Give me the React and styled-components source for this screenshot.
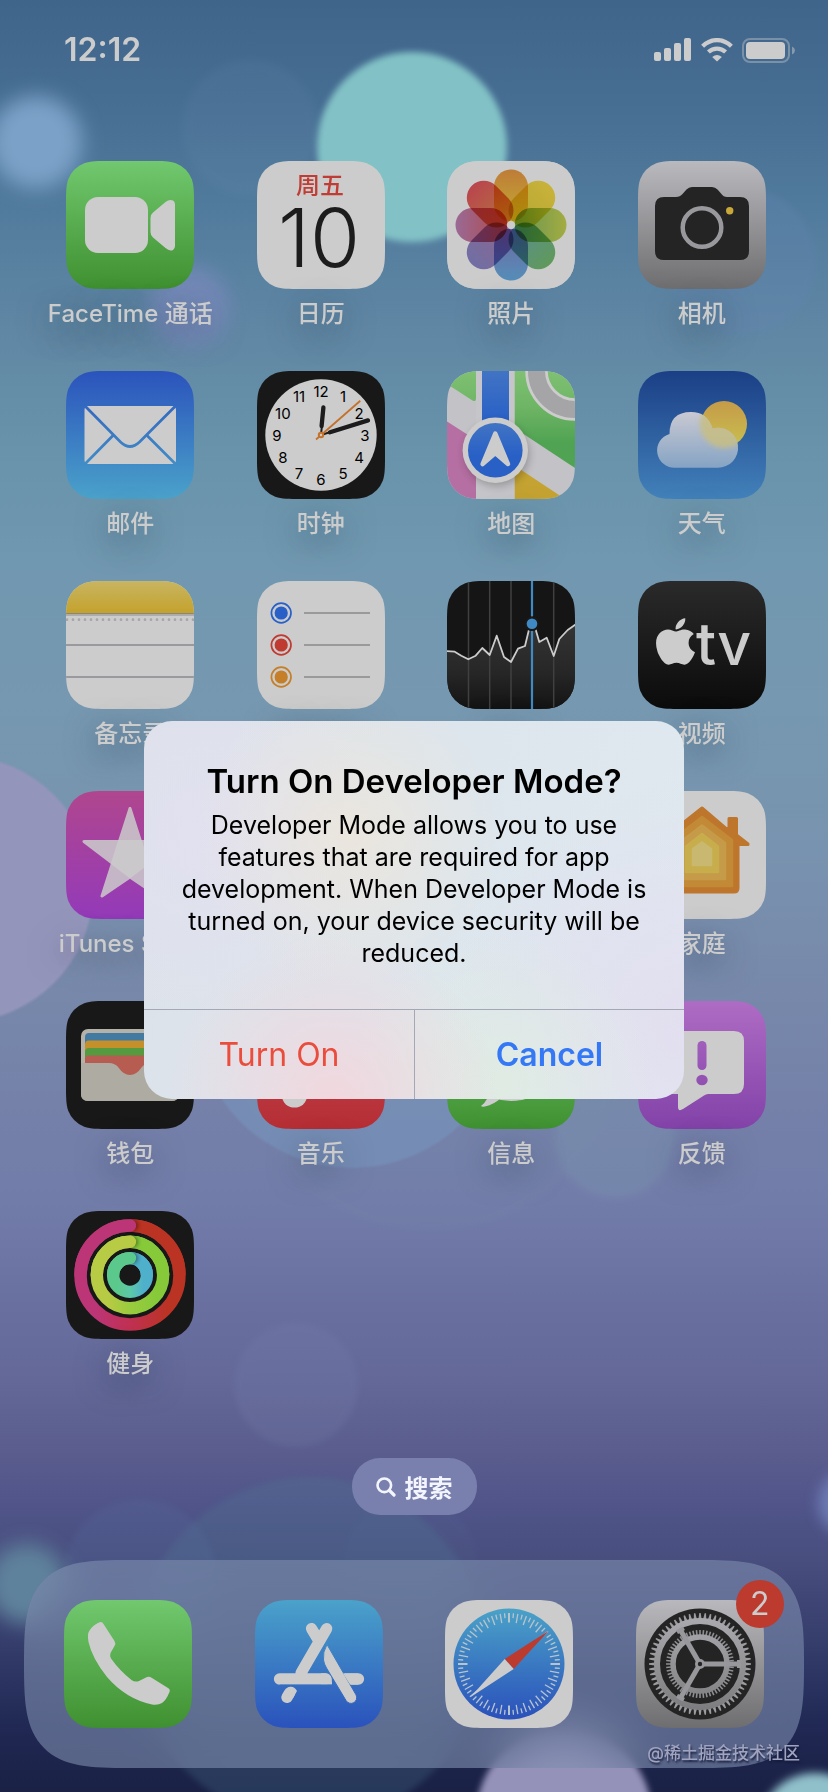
import React from "react";
import styled, { createGlobalStyle, css } from "styled-components";
import { FaApple } from "react-icons/fa";

const GlobalStyle = createGlobalStyle`
  *, *::before, *::after { box-sizing: border-box; }
  body {
    margin: 0;
    font-family: Inter, "Noto Sans CJK SC", sans-serif;
    color: #cccccc;
    background: #1a2145;
  }
  button { font: inherit; color: inherit; border: 0; padding: 0; background: none; cursor: pointer; }
`;

/* ---------- page parts ---------- */

const Screen = styled.div`
  position: relative;
  min-height: 100vh;
  display: flex;
  flex-direction: column;
  overflow: hidden;
`;

const WallpaperArt = styled.svg`
  position: absolute;
  inset: 0;
  width: 100%;
  height: 100%;
`;

const Home = styled.main`
  position: relative;
  flex: 1;
  display: flex;
  flex-direction: column;
`;

const StatusBar = styled.header`
  display: flex;
  align-items: center;
  justify-content: space-between;
  padding: 34px 32px 0 64px;
`;

const Time = styled.time`
  font-size: 32px;
  line-height: 32px;
  font-weight: 600;
`;

const StatusIcons = styled.div`
  display: flex;
  align-items: center;
  gap: 9px;
`;

const AppGrid = styled.div`
  display: grid;
  grid-template-columns: repeat(4, minmax(0, 1fr));
  row-gap: 43px;
  padding: 95px 31px 0 35px;
`;

const AppButton = styled.button`
  display: flex;
  flex-direction: column;
  align-items: center;
  gap: 11px;
`;

const AppArt = styled.svg`
  display: block;
  width: 128px;
  height: 128px;
  font-family: Inter, "Noto Sans CJK SC", sans-serif;
`;

const ArtFrame = styled.span`
  position: relative;
  display: block;
`;

const AppLabel = styled.span`
  font-size: 24px;
  line-height: 28px;
  font-weight: 500;
  white-space: nowrap;
  text-shadow: 0 8px 32px rgba(30, 50, 70, 0.6);
`;

const Badge = styled.span`
  position: absolute;
  top: -20px;
  right: -20px;
  width: 48px;
  height: 48px;
  border-radius: 24px;
  background: #bc3a2e;
  font-size: 32px;
  line-height: 48px;
  text-align: center;
`;

const SearchButton = styled.button`
  align-self: center;
  display: flex;
  align-items: center;
  gap: 9px;
  height: 57px;
  margin-top: 80px;
  padding: 0 24px;
  border-radius: 28px;
  background: #7a80ad;
  color: #f3f5ff;
  font-size: 24px;
  font-weight: 700;
`;

const Dock = styled.nav`
  display: grid;
  grid-template-columns: repeat(4, minmax(0, 1fr));
  margin: auto 24px 24px;
  padding: 40px 9px;
  border-radius: 70px;
  background: rgba(130, 145, 178, 0.58);
  backdrop-filter: blur(24px);

  @supports (corner-shape: squircle) {
    border-radius: 104px;
    corner-shape: superellipse(1.7);
  }
`;

const Overlay = styled.div`
  position: absolute;
  inset: 0;
  display: flex;
  align-items: center;
  justify-content: center;
  padding-top: 28px;
`;

const Dialog = styled.section`
  width: 540px;
  border-radius: 28px;
  overflow: hidden;
  color: #000000;
  text-align: center;
  background:
    radial-gradient(circle at 35% 100%, rgba(243, 214, 220, 0.9), transparent 32%),
    radial-gradient(circle at 66% 96%, rgba(224, 236, 226, 0.9), transparent 30%),
    radial-gradient(circle at 38% 30%, rgba(236, 230, 220, 0.9), transparent 36%),
    radial-gradient(circle at 100% 80%, rgba(227, 222, 240, 0.9), transparent 40%),
    radial-gradient(circle at 12% 30%, rgba(226, 224, 240, 0.9), transparent 34%),
    linear-gradient(100deg, #dde2ea, #dde6ed 55%, #dfe9ef);
`;

const DialogText = styled.div`
  padding: 40px 28px;
`;

const DialogTitle = styled.h1`
  margin: 0;
  font-size: 33px;
  line-height: 40px;
  font-weight: 600;
`;

const DialogBody = styled.p`
  margin: 8px 0 0;
  font-size: 25px;
  line-height: 32px;
`;

const DialogActions = styled.div`
  display: grid;
  grid-template-columns: 1fr 1fr;
  height: 90px;
  border-top: 1px solid #a4a8b4;
`;

const DialogButton = styled.button`
  font-size: 32px;
  line-height: 40px;
  ${({ $primary }) =>
    $primary
      ? css`
          color: #3478f6;
          font-weight: 600;
          border-left: 1px solid #a4a8b4;
        `
      : css`
          color: #eb4d3d;
        `}
`;

const Watermark = styled.span`
  position: absolute;
  right: 28px;
  bottom: 26px;
  font-size: 17px;
  line-height: 26px;
  font-weight: 500;
  color: #a0a4c0;
  text-shadow: 1px 2px 2px rgba(20, 25, 55, 0.9);
`;

/* ---------- drawing helpers ---------- */

const SQUIRCLE =
  "M44 0H84C96.7 0 103 0 109.8 2.2A28.8 28.8 0 0 1 125.8 18.2C128 25 128 31.3 128 44V84" +
  "C128 96.7 128 103 125.8 109.8A28.8 28.8 0 0 1 109.8 125.8C103 128 96.7 128 84 128H44" +
  "C31.3 128 25 128 18.2 125.8A28.8 28.8 0 0 1 2.2 109.8C0 103 0 96.7 0 84V44" +
  "C0 31.3 0 25 2.2 18.2A28.8 28.8 0 0 1 18.2 2.2C25 0 31.3 0 44 0Z";

function Tile({ id, from, to = from, children }) {
  return (
    <AppArt viewBox="0 0 128 128" aria-hidden="true">
      <defs>
        <clipPath id={`${id}-clip`}>
          <path d={SQUIRCLE} />
        </clipPath>
        <linearGradient id={`${id}-bg`} gradientUnits="userSpaceOnUse" x1="0" y1="0" x2="0" y2="128">
          <stop offset="0" stopColor={from} />
          <stop offset="1" stopColor={to} />
        </linearGradient>
      </defs>
      <g clipPath={`url(#${id}-clip)`}>
        <rect width="128" height="128" fill={`url(#${id}-bg)`} />
        {children}
      </g>
    </AppArt>
  );
}

function Fade({ id, stops, ...axis }) {
  return (
    <linearGradient id={id} gradientUnits="userSpaceOnUse" {...axis}>
      {stops.map(([offset, color]) => (
        <stop key={offset} offset={offset} stopColor={color} />
      ))}
    </linearGradient>
  );
}

const polar = (r, deg) => [
  64 + r * Math.sin((deg * Math.PI) / 180),
  64 - r * Math.cos((deg * Math.PI) / 180),
];

/* ---------- app icons ---------- */

const FaceTime = () => (
  <Tile id="facetime" from="#71c86e" to="#3f9030">
    <rect x="19" y="36" width="63" height="56" rx="13" fill="#ccc" />
    <path
      d="M84.5 57Q84.5 53.500 87 51.500L99.500 41Q103.500 37.800 107 39.500Q109 40.600 109 43.500V85Q109 87.800 107 88.900Q103.500 90.500 99.500 87L87 76.500Q84.500 74.500 84.500 71Z"
      fill="#ccc"
    />
  </Tile>
);

const Calendar = () => (
  <Tile id="calendar" from="#cccccc">
    <text x="63" y="33" textAnchor="middle" fontSize="24" fontWeight="500" fill="#bf3d35">
      周五
    </text>
    <text x="62" y="106" textAnchor="middle" fontSize="81" fontWeight="300" fill="#1c1c1c">
      10
    </text>
  </Tile>
);

const Multiply = styled.g`
  isolation: isolate;
  & > rect { mix-blend-mode: multiply; }
`;

const PETALS = [
  ["#ee9a45", "#f3d83e"],
  ["#fbdf48", "#e0d040"],
  ["#ccd850", "#7fb86a"],
  ["#78c070", "#6fb0b8"],
  ["#6ab2e8", "#8a80c8"],
  ["#8c8ace", "#b080b0"],
  ["#c084bc", "#dd5a58"],
  ["#e85560", "#e09050"],
];

const Photos = () => (
  <Tile id="photos" from="#cccccc">
    <defs>
      {PETALS.map(([outer, inner], i) => (
        <Fade key={i} id={`petal-${i}`} x1="0" y1="8" x2="0" y2="60" stops={[[0, outer], [1, inner]]} />
      ))}
    </defs>
    <Multiply>
      <rect width="128" height="128" fill="#ccc" />
      {PETALS.map((_, i) => (
        <rect
          key={i}
          x="47"
          y="8.500"
          width="34"
          height="52"
          rx="17"
          fill={`url(#petal-${i})`}
          transform={`rotate(${i * 45} 64 64)`}
        />
      ))}
    </Multiply>
    <circle cx="64" cy="64" r="4" fill="#ccc" />
  </Tile>
);

const Camera = () => (
  <Tile id="camera" from="#b9b9be" to="#6e6e70">
    <path
      d="M26 36H38Q42 36 44.500 33L48.500 28.500Q50.800 26 54 26H74Q77.200 26 79.500 28.500L83 32.500Q85.500 36 89 36H102Q111 36 111 45V90Q111 99 102 99H26Q17 99 17 90V45Q17 36 26 36Z"
      fill="#242424"
    />
    <circle cx="64" cy="66.500" r="19.300" fill="none" stroke="#98989d" strokeWidth="4.500" />
    <circle cx="91.700" cy="49.700" r="3.700" fill="#c9a83a" />
  </Tile>
);

const Mail = () => (
  <Tile id="mail" from="#2b53bc" to="#4aa2ca">
    <rect x="18.500" y="35" width="91.500" height="58" rx="4" fill="#ccc" />
    <g fill="none" stroke="url(#mail-bg)" strokeWidth="2.700">
      <path d="M19 35L54.500 71Q64 80 73.500 71L109.500 35" />
      <path d="M47.500 64L19 93M80.500 64L109.500 93" />
    </g>
  </Tile>
);

const Clock = () => (
  <Tile id="clock" from="#181818">
    <circle cx="64" cy="64" r="55.700" fill="#ccc" />
    {Array.from({ length: 12 }, (_, i) => {
      const [x, y] = polar(44, (i + 1) * 30);
      return (
        <text key={i} x={x} y={y + 5.500} textAnchor="middle" fontSize="15" fill="#000">
          {i + 1}
        </text>
      );
    })}
    <g stroke="#1c1c1c" strokeLinecap="round">
      <path d="M64 64L66.500 38M64 64L110 49.500" strokeWidth="2" />
      <path d="M64.600 55L66.400 36.500M73 61.300L111 49.400" strokeWidth="4.300" />
    </g>
    <circle cx="64" cy="64" r="3.200" fill="#c4722b" />
    <path d="M59 68.500L103.300 29.700" stroke="#c4722b" strokeWidth="1.800" />
    <circle cx="64" cy="64" r="1.200" fill="#ccc" />
  </Tile>
);

const Maps = () => (
  <Tile id="maps" from="#c2c2c7">
    <defs>
      <Fade id="maps-green" x1="0" y1="0" x2="0" y2="90" stops={[[0, "#80c072"], [0.4, "#6eb565"], [0.800, "#4fa352"]]} />
      <Fade id="maps-blue" x1="0" y1="0" x2="0" y2="50" stops={[[0, "#4274c4"], [1, "#2860c6"]]} />
      <Fade id="maps-disc" x1="0" y1="52" x2="0" y2="107" stops={[[0, "#4274c4"], [0.600, "#2860c6"]]} />
      <filter id="maps-soft" x="-30%" y="-30%" width="160%" height="160%">
        <feGaussianBlur stdDeviation="4" />
      </filter>
    </defs>
    <path d="M0 0H29V27Q29 31.500 25.500 29.500L0 13Z" fill="url(#maps-green)" />
    <path d="M67.500 0H128V97L67.500 57Z" fill="url(#maps-green)" />
    <path d="M0 50.500L29 69V128H0Z" fill="#b56fa2" />
    <path d="M67.500 94.500L118 128H67.500Z" fill="#c4a332" />
    <rect x="29" y="0" width="38.500" height="128" fill="#c6c6ca" />
    <rect x="35" y="0" width="27" height="60" fill="url(#maps-blue)" />
    <circle cx="128" cy="0" r="38.500" fill="none" stroke="#ccc" strokeWidth="22.500" />
    <circle cx="128" cy="0" r="38.500" fill="none" stroke="#a5a5a7" strokeWidth="17" />
    <circle cx="50" cy="83" r="32" fill="#000" opacity="0.250" filter="url(#maps-soft)" />
    <circle cx="48.300" cy="79.300" r="32.700" fill="#ccc" />
    <circle cx="48.300" cy="79.300" r="27.300" fill="url(#maps-disc)" />
    <path d="M48.300 62.500L61 93L48.300 82L35.600 93Z" fill="#ccc" stroke="#ccc" strokeWidth="4.500" strokeLinejoin="round" />
  </Tile>
);

const CLOUD =
  "M37 96.700A17.200 17.200 0 0 1 31.500 63Q31.500 41 53 41Q69.500 41 74.500 57.500A20 20 0 1 1 79.500 96.700Z";

const Weather = () => (
  <Tile id="weather" from="#1b3f86" to="#4281ba">
    <defs>
      <Fade id="weather-sun" x1="0" y1="30" x2="0" y2="76" stops={[[0, "#c69a48"], [1, "#c8c050"]]} />
      <Fade id="weather-cloud" x1="0" y1="41" x2="0" y2="97" stops={[[0, "#c9c9d2"], [1, "#85a3c4"]]} />
      <clipPath id="weather-cloud-clip">
        <path d={CLOUD} />
      </clipPath>
      <filter id="weather-soft">
        <feGaussianBlur stdDeviation="2.500" />
      </filter>
    </defs>
    <circle cx="86" cy="53" r="23" fill="url(#weather-sun)" />
    <path d={CLOUD} fill="url(#weather-cloud)" />
    <g clipPath="url(#weather-cloud-clip)">
      <circle cx="86" cy="53" r="24" fill="#c8be82" opacity="0.850" filter="url(#weather-soft)" />
    </g>
  </Tile>
);

const Notes = () => (
  <Tile id="notes" from="#cccccc">
    <defs>
      <Fade id="notes-top" x1="0" y1="0" x2="0" y2="32" stops={[[0, "#c8b562"], [1, "#c4a22c"]]} />
    </defs>
    <rect width="128" height="32" fill="url(#notes-top)" />
    <rect y="32" width="128" height="1.500" fill="#8c8676" />
    <rect y="33.500" width="128" height="1.500" fill="#adadad" />
    <path d="M1 38.700H128" stroke="#a6a6a8" strokeWidth="2.700" strokeLinecap="round" strokeDasharray="0 6" />
    <path d="M0 64H128M0 96H128" stroke="#9a9a9e" strokeWidth="2" />
  </Tile>
);

const Reminders = () => (
  <Tile id="reminders" from="#cccccc">
    {[
      [32, "#2860c8"],
      [64, "#bf3a30"],
      [96, "#c47f28"],
    ].map(([y, color]) => (
      <g key={y}>
        <circle cx="24.200" cy={y} r="9.800" fill="none" stroke={color} strokeWidth="1.700" />
        <circle cx="24.200" cy={y} r="6.600" fill={color} />
        <path d={`M47 ${y}H113`} stroke="#9a9a9c" strokeWidth="2" />
      </g>
    ))}
  </Tile>
);

const STOCK_LINE =
  "M-2 70L7.700 70.700L14.300 74.700L21.300 78.300L28.700 74.700L35.300 67L42.700 74L49.700 54.700L57 76L64 81L71 67.700L78 65L85 36L92.300 61L99.700 56.700L106.700 75L112.300 58L120.700 49L130 42.500";

const Stocks = () => (
  <Tile id="stocks" from="#151515">
    <defs>
      <Fade id="stocks-area" x1="0" y1="40" x2="0" y2="128" stops={[[0, "#363636"], [0.600, "#262626"], [1, "#131313"]]} />
    </defs>
    <path d={`${STOCK_LINE}V128H-2Z`} fill="url(#stocks-area)" />
    <path d="M21.500 0V128M42.700 0V128M64 0V128M106.700 0V128" stroke="#404040" strokeWidth="1.500" />
    <path d={STOCK_LINE} fill="none" stroke="#ccc" strokeWidth="1.800" strokeLinejoin="round" />
    <circle cx="85" cy="42.700" r="7.500" fill="#181818" />
    <path d="M85 0V35M85 50V128" stroke="#3f8ac5" strokeWidth="2.200" />
    <circle cx="85" cy="42.700" r="5.300" fill="#3f8ac5" />
  </Tile>
);

const Tv = () => (
  <Tile id="tv" from="#2a2a2a" to="#0b0b0b">
    <FaApple x="11" y="34" size={53} color="#ccc" />
    <text x="58" y="84" fontSize="59" fontWeight="500" fill="#ccc">
      tv
    </text>
  </Tile>
);

const ITunes = () => (
  <Tile id="itunes" from="#b0468e" to="#933ab9">
    <g fill="#cccccc" stroke="#cccccc" strokeWidth="3" strokeLinejoin="round">
      <path d="M64 17.500L36 105L64 86L92 105Z" opacity="0.850" />
      <path d="M18 50.500H110L64 85.500Z" opacity="0.850" />
    </g>
  </Tile>
);

const house = (tip, half, shoulder, bottom) =>
  `M64 ${tip}L${64 + half} ${shoulder}V${bottom}H${64 - half}V${shoulder}Z`;

const HomeKit = () => (
  <Tile id="homekit" from="#cccccc">
    <g fill="#be752c" stroke="#be752c" strokeWidth="3" strokeLinejoin="round">
      <path d="M64 17L88 37.500H91V27.500H98.500V44L110 53V53.500H100V97Q100 101 96 101H32Q28 101 28 97V53.500H18Z" />
    </g>
    {[
      [house(26, 30, 49, 95), "#c28a36"],
      [house(34.500, 23, 52, 88), "#c59a48"],
      [house(43, 16, 55.500, 81), "#c8ad4c"],
      [house(51.500, 9, 58, 74), "#c8b870"],
    ].map(([d, color]) => (
      <path key={color} d={d} fill={color} stroke={color} strokeWidth="2.500" strokeLinejoin="round" />
    ))}
  </Tile>
);

const Wallet = () => (
  <Tile id="wallet" from="#181818">
    <rect x="15" y="28" width="98" height="72" rx="7" fill="#b5b2aa" />
    {[
      [32, "#437aa2"],
      [39.500, "#c4902c"],
      [47, "#559a3e"],
      [54.500, "#b65c50"],
    ].map(([y, color]) => (
      <rect key={y} x="19" y={y} width="90" height="30" rx="4" fill={color} />
    ))}
    <path
      d="M15 62H43Q49 62 52.500 66.500Q57.500 74 64 74Q70.500 74 75.500 66.500Q79 62 85 62H113V93Q113 100 106 100H22Q15 100 15 93Z"
      fill="#aeaba3"
    />
  </Tile>
);

const Music = () => (
  <Tile id="music" from="#c84858" to="#b52e34">
    <path d="M49 94V33L97 23V80" fill="none" stroke="#ccc" strokeWidth="7" />
    <ellipse cx="37.500" cy="95" rx="12.500" ry="11.500" fill="#ccc" />
    <ellipse cx="86" cy="82" rx="12.500" ry="11.500" fill="#ccc" />
  </Tile>
);

const Messages = () => (
  <Tile id="messages" from="#71c86e" to="#3f9030">
    <ellipse cx="64" cy="60" rx="46" ry="40" fill="#ccc" />
    <path d="M42 88Q42 99 34 105Q35 106 38 105.500Q47 103.500 54 97Z" fill="#ccc" />
  </Tile>
);

const Feedback = () => (
  <Tile id="feedback" from="#ae6cc4" to="#8242a8">
    <path
      d="M32 30H96Q106 30 106 40V83Q106 93 96 93H70Q68 93 66 94.500L45 108Q40 111 40 106V93H32Q22 93 22 83V40Q22 30 32 30Z"
      fill="#ccc"
    />
    <rect x="59.500" y="40" width="9" height="29" rx="4.500" fill="url(#feedback-bg)" />
    <ellipse cx="64" cy="79" rx="5.700" ry="5.200" fill="url(#feedback-bg)" />
  </Tile>
);

const RINGS = [
  { r: 49.500, from: "#bc3576", mid: "#c03052", to: "#bb3322" },
  { r: 33.200, from: "#b8cb44", mid: "#9acb3e", to: "#86ca3a" },
  { r: 16.900, from: "#5cc98c", mid: "#5cc9a8", to: "#4fb0cc" },
];

const Fitness = () => (
  <Tile id="fitness" from="#181818">
    <defs>
      {RINGS.map(({ r, from, mid, to }, i) => (
        <Fade key={i} id={`ring-${i}`} x1={64 - r} y1="64" x2={64 + r} y2="64" stops={[[0.150, from], [0.500, mid], [0.900, to]]} />
      ))}
      <filter id="ring-soft" x="-50%" y="-50%" width="200%" height="200%">
        <feGaussianBlur stdDeviation="2" />
      </filter>
    </defs>
    {RINGS.map(({ r, from, to }, i) => (
      <g key={i} fill="none" strokeWidth="12.400">
        <circle cx="64" cy="64" r={r} stroke={`url(#ring-${i})`} />
        <path d={`M64 ${64 - r}A${r} ${r} 0 0 1 ${64 + r} 64`} stroke={to} />
        <circle cx="66.500" cy={64 - r} r="5.500" fill="#000" opacity="0.450" filter="url(#ring-soft)" />
        <path d={`M${64 - r} 64A${r} ${r} 0 0 1 64 ${64 - r}`} stroke={from} strokeLinecap="round" />
      </g>
    ))}
  </Tile>
);

const Phone = () => (
  <Tile id="phone" from="#71c86e" to="#3f9030">
    <path
      d="M35 22.500Q38 21 39.500 24L50.500 41Q52 43.500 50.500 46L46.500 53Q45.500 56 47 58.500Q56 71 67.500 80Q71 82.500 75 81L82 77.500Q85 76 88 78L104 88Q106.500 89.500 105.500 92Q102 100.500 98 103Q94 105.500 88 104.500Q62 99 43 77Q28 58 24.500 42Q23 34 25.500 30.500Q29 25 35 22.500Z"
      fill="#ccc"
    />
  </Tile>
);

const AppStore = () => (
  <Tile id="appstore" from="#4aa2ca" to="#2a52bc">
    <g fill="none" stroke="#ccc" strokeWidth="11.300" strokeLinecap="round">
      <path d="M71.700 28.600L46 73M56.500 28.600L64 41M32 97.400L34.500 93M24.500 79H71M90 79H103.500" />
    </g>
    <path d="M70 73.300Q77 74 77 82V84.700H66V73.300Z" fill="#ccc" />
    <path d="M24.500 85.500H79V84" stroke="url(#appstore-bg)" strokeWidth="2" fill="none" />
    <path d="M30 91Q33 86 36 86.800Q40 87 42 91L38 98" fill="#ccc" />
    <path
      d="M72 44.500Q67.500 52 68.500 60Q69 64 71.500 68L91 100.500A5.700 5.700 0 0 0 101 94.800Z"
      fill="#ccc"
      stroke="url(#appstore-bg)"
      strokeWidth="1"
    />
    <path d="M88 73.400L103 73.400V84.600H95Z" fill="#ccc" />
  </Tile>
);

const Safari = () => (
  <Tile id="safari" from="#cccccc">
    <defs>
      <Fade id="safari-disc" x1="0" y1="8" x2="0" y2="120" stops={[[0, "#4aa2c8"], [1, "#2a50bb"]]} />
    </defs>
    <circle cx="64" cy="64" r="55.500" fill="url(#safari-disc)" />
    {Array.from({ length: 72 }, (_, i) => {
      const [x1, y1] = polar(51, i * 5);
      const [x2, y2] = polar(i % 2 ? 46 : 41.500, i * 5);
      return <line key={i} x1={x1} y1={y1} x2={x2} y2={y2} stroke="#b8c4cc" strokeWidth={i % 18 ? 1.300 : 2} />;
    })}
    <path d="M103.700 30.700L59.700 59L68.700 69Z" fill="#bc3a2e" />
    <path d="M25.300 97.300L59.700 59L68.700 69Z" fill="#ccc" />
  </Tile>
);

const Settings = () => (
  <Tile id="settings" from="#b9b9bd" to="#6e6e70">
    <defs>
      <Fade id="settings-metal" x1="0" y1="8" x2="0" y2="120" stops={[[0, "#b0b0b4"], [1, "#78787a"]]} />
    </defs>
    <circle cx="64" cy="64" r="55.500" fill="#242424" />
    {Array.from({ length: 60 }, (_, i) => {
      const a = polar(45, i * 6 - 2);
      const b = polar(51, i * 6 - 0.800);
      const c = polar(51, i * 6 + 0.800);
      const d = polar(45, i * 6 + 2);
      return <polygon key={i} points={[a, b, c, d].map((p) => p.join()).join(" ")} fill="#9c9ca0" />;
    })}
    <circle cx="64" cy="64" r="43" fill="none" stroke="url(#settings-metal)" strokeWidth="6" />
    {Array.from({ length: 60 }, (_, i) => {
      const [x1, y1] = polar(29, i * 6);
      const [x2, y2] = polar(34, i * 6);
      return <line key={i} x1={x1} y1={y1} x2={x2} y2={y2} stroke="#8e8e92" strokeWidth="1.600" />;
    })}
    <circle cx="64" cy="64" r="27" fill="none" stroke="url(#settings-metal)" strokeWidth="5.500" />
    {[90, 210, 330].map((deg) => {
      const [x, y] = polar(41, deg);
      const [wx, wy] = polar(37, deg);
      return (
        <g key={deg} stroke="#98989c">
          <line x1="64" y1="64" x2={x} y2={y} strokeWidth="5" />
          <line x1={wx} y1={wy} x2={x} y2={y} strokeWidth="8" />
        </g>
      );
    })}
    <circle cx="64" cy="64" r="5" fill="#98989c" />
    <circle cx="64" cy="64" r="2.200" fill="#242424" />
  </Tile>
);

/* ---------- status icons ---------- */

const SignalIcon = () => (
  <svg width="38" height="24" viewBox="0 0 38 24" fill="#ccc" aria-label="信号">
    <rect x="0" y="14" width="7" height="9" rx="2" />
    <rect x="10" y="10" width="7" height="13" rx="2" />
    <rect x="20" y="5" width="7" height="18" rx="2" />
    <rect x="30" y="0" width="7" height="23" rx="2" />
  </svg>
);

const WifiIcon = () => (
  <svg width="32" height="24" viewBox="0 0 32 24" aria-label="Wi-Fi">
    <g fill="none" stroke="#ccc" strokeWidth="4.300">
      <path d="M1.600 8.200Q8 2.100 16 2.100T30.400 8.200" />
      <path d="M7.400 14Q11.200 10.600 16 10.600T24.600 14" />
    </g>
    <path d="M11.200 19Q16 15 20.800 19L16 23.600Z" fill="#ccc" />
  </svg>
);

const BatteryIcon = () => (
  <svg width="54" height="25" viewBox="0 0 54 25" aria-label="电池">
    <rect x="1" y="1" width="46" height="23" rx="7" fill="none" stroke="#ccc" strokeOpacity="0.400" strokeWidth="2" />
    <rect x="4" y="4" width="39" height="17" rx="4" fill="#ccc" />
    <path d="M50 8.500Q53 9.800 53 12.500T50 16.500Z" fill="#ccc" fillOpacity="0.500" />
  </svg>
);

const SearchIcon = () => (
  <svg width="20" height="20" viewBox="0 0 20 20" fill="none" stroke="#f3f5ff" strokeWidth="2.600" strokeLinecap="round" aria-hidden="true">
    <circle cx="8.300" cy="8.300" r="6.800" />
    <path d="M13.500 13.500L18 18" strokeWidth="3.200" />
  </svg>
);

/* ---------- wallpaper ---------- */

const SKY = [
  [0, "#40658a"],
  [100, "#466d92"],
  [200, "#507a9c"],
  [330, "#6087a4"],
  [450, "#6893aa"],
  [560, "#7098b0"],
  [700, "#7698b0"],
  [850, "#7893af"],
  [950, "#788bab"],
  [1100, "#7581a9"],
  [1200, "#727ca9"],
  [1280, "#6b73a2"],
  [1380, "#636898"],
  [1450, "#5a5d8d"],
  [1500, "#51558a"],
  [1560, "#484e7e"],
  [1640, "#363e6c"],
  [1720, "#212955"],
  [1792, "#1a2145"],
];

const BOKEH = [
  { x: 412, y: 147, r: 95, fill: "#82c2c6", blur: 3 },
  { x: 36, y: 142, r: 46, fill: "#7ba1c8", blur: 10 },
  { x: 250, y: 128, r: 68, fill: "#6f94b4", opacity: 0.130, blur: 4 },
  { x: 742, y: 262, r: 74, fill: "#6284b0", opacity: 0.350, blur: 3 },
  { x: 190, y: 308, r: 40, fill: "#7d8cc0", opacity: 0.750, blur: 10 },
  { x: -40, y: 889, r: 133, fill: "#9495bb", blur: 1 },
  { x: 430, y: 1040, r: 192, fill: "#7a94ac", opacity: 0.100, blur: 3 },
  { x: 352, y: 1010, r: 158, fill: "#7796be", opacity: 0.550, blur: 1 },
  { x: 615, y: 1138, r: 60, fill: "#7a98b0", opacity: 0.350, blur: 4 },
  { x: 296, y: 1385, r: 62, fill: "#7a84b0", opacity: 0.200, blur: 3 },
  { x: 310, y: 1650, r: 173, fill: "#507d96", opacity: 0.260, blur: 3 },
  { x: 140, y: 1575, r: 76, fill: "#5870a0", opacity: 0.220, blur: 3 },
  { x: 410, y: 1565, r: 68, fill: "#5878a0", opacity: 0.080, blur: 3 },
  { x: 27, y: 1584, r: 40, fill: "#5f829c", blur: 10 },
  { x: 850, y: 1503, r: 32, fill: "#7484c0", opacity: 0.800, blur: 7 },
  { x: 564, y: 1816, r: 88, fill: "#9592ba", blur: 3 },
  { x: 815, y: 1830, r: 57, fill: "#90c0ca", blur: 4 },
];

const Wallpaper = () => (
  <WallpaperArt viewBox="0 0 828 1792" preserveAspectRatio="xMidYMid slice" aria-hidden="true">
    <defs>
      <linearGradient id="sky" x1="0" y1="0" x2="0" y2="1">
        {SKY.map(([y, color]) => (
          <stop key={y} offset={y / 1792} stopColor={color} />
        ))}
      </linearGradient>
      {[1, 3, 4, 7, 10].map((n) => (
        <filter key={n} id={`bokeh-${n}`} x="-50%" y="-50%" width="200%" height="200%">
          <feGaussianBlur stdDeviation={n} />
        </filter>
      ))}
    </defs>
    <rect width="828" height="1792" fill="url(#sky)" />
    {BOKEH.map(({ x, y, r, fill, opacity = 1, blur }) => (
      <circle key={`${x}-${y}`} cx={x} cy={y} r={r} fill={fill} opacity={opacity} filter={`url(#bokeh-${blur})`} />
    ))}
  </WallpaperArt>
);

/* ---------- screen ---------- */

const HOME_APPS = [
  ["FaceTime 通话", FaceTime],
  ["日历", Calendar],
  ["照片", Photos],
  ["相机", Camera],
  ["邮件", Mail],
  ["时钟", Clock],
  ["地图", Maps],
  ["天气", Weather],
  ["备忘录", Notes],
  ["提醒事项", Reminders],
  ["股市", Stocks],
  ["视频", Tv],
  ["iTunes Store", ITunes],
  null,
  null,
  ["家庭", HomeKit],
  ["钱包", Wallet],
  ["音乐", Music],
  ["信息", Messages],
  ["反馈", Feedback],
  ["健身", Fitness],
];

const DOCK_APPS = [
  ["电话", Phone],
  ["App Store", AppStore],
  ["Safari 浏览器", Safari],
  ["设置", Settings, 2],
];

export default function App() {
  return (
    <Screen>
      <GlobalStyle />
      <Wallpaper />
      <Home>
        <StatusBar>
          <Time>12:12</Time>
          <StatusIcons>
            <SignalIcon />
            <WifiIcon />
            <BatteryIcon />
          </StatusIcons>
        </StatusBar>
        <AppGrid>
          {HOME_APPS.map((app, i) => {
            if (!app) return <span key={i} />;
            const [name, Icon] = app;
            return (
              <AppButton key={name} type="button">
                <Icon />
                <AppLabel>{name}</AppLabel>
              </AppButton>
            );
          })}
        </AppGrid>
        <SearchButton type="button">
          <SearchIcon />
          搜索
        </SearchButton>
        <Dock aria-label="程序坞">
          {DOCK_APPS.map(([name, Icon, badge]) => (
            <AppButton key={name} type="button" aria-label={name}>
              <ArtFrame>
                <Icon />
                {badge && <Badge>{badge}</Badge>}
              </ArtFrame>
            </AppButton>
          ))}
        </Dock>
      </Home>
      <Overlay>
        <Dialog role="alertdialog" aria-labelledby="dialog-title" aria-describedby="dialog-body">
          <DialogText>
            <DialogTitle id="dialog-title">Turn On Developer Mode?</DialogTitle>
            <DialogBody id="dialog-body">
              Developer Mode allows you to use features that are required for app development. When
              Developer Mode is turned on, your device security will be reduced.
            </DialogBody>
          </DialogText>
          <DialogActions>
            <DialogButton type="button">Turn On</DialogButton>
            <DialogButton type="button" $primary>
              Cancel
            </DialogButton>
          </DialogActions>
        </Dialog>
      </Overlay>
      <Watermark>@稀土掘金技术社区</Watermark>
    </Screen>
  );
}
